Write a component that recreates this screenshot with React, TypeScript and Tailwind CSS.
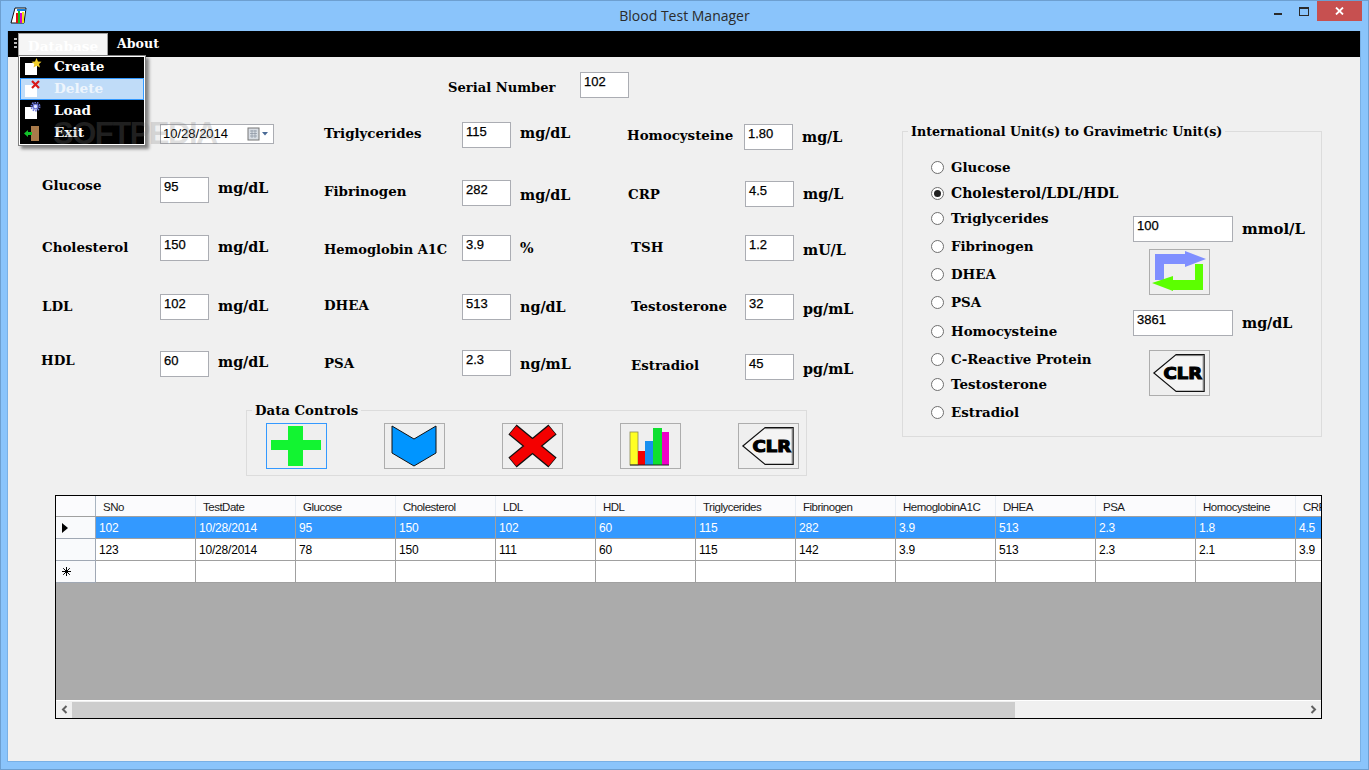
const slab = "font-['DejaVu_Serif',serif] font-bold leading-4 text-black whitespace-nowrap";
const lab = `${slab} text-[13.4px]`;
const unitText = `${slab} text-[14.3px]`;
const box = "h-[26px] border border-[#abadb3] bg-white pl-[3px] pt-[1px] text-[13px] leading-4 text-black [-webkit-text-stroke:0.25px_#000]";
const iconBtn = "flex h-[46px] w-[61px] items-center justify-center border border-[#adadad] bg-[#efefef]";

type Field = {
  label: string;
  value: string;
  unit: string;
  gap: string;
  labelCls: string;
  unitCls: string;
};

const col1: Field[] = [
  { label: "Glucose", value: "95", unit: "mg/dL", gap: "mt-[33px]", labelCls: "w-[118px] mt-0", unitCls: "mt-[3px]" },
  { label: "Cholesterol", value: "150", unit: "mg/dL", gap: "mt-[32px]", labelCls: "w-[118px] mt-[4px]", unitCls: "mt-[4px]" },
  { label: "LDL", value: "102", unit: "mg/dL", gap: "mt-[33px]", labelCls: "w-[118px] mt-[4px]", unitCls: "mt-[4px]" },
  { label: "HDL", value: "60", unit: "mg/dL", gap: "mt-[31px]", labelCls: "w-[119px] -ml-[1px] mt-[1px]", unitCls: "mt-[3px]" },
];

const col2: Field[] = [
  { label: "Triglycerides", value: "115", unit: "mg/dL", gap: "mt-0", labelCls: "w-[138px] mt-[3px]", unitCls: "mt-[3px]" },
  { label: "Fibrinogen", value: "282", unit: "mg/dL", gap: "mt-[32px]", labelCls: "w-[138px] mt-[3px]", unitCls: "mt-[7px]" },
  { label: "Hemoglobin A1C", value: "3.9", unit: "%", gap: "mt-[29px]", labelCls: "w-[138px] mt-[7px] !text-[13px]", unitCls: "mt-[5px]" },
  { label: "DHEA", value: "513", unit: "ng/dL", gap: "mt-[33px]", labelCls: "w-[138px] mt-[3px]", unitCls: "mt-[5px]" },
  { label: "PSA", value: "2.3", unit: "ng/mL", gap: "mt-[30px]", labelCls: "w-[138px] mt-[5px]", unitCls: "mt-[6px]" },
];

const col3: Field[] = [
  { label: "Homocysteine", value: "1.80", unit: "mg/L", gap: "mt-[2px]", labelCls: "w-[117px] mt-[3px]", unitCls: "mt-[5px] ml-[1px]" },
  { label: "CRP", value: "4.5", unit: "mg/L", gap: "mt-[31px]", labelCls: "w-[118px] pl-[1px] mt-[5px]", unitCls: "mt-[5px]" },
  { label: "TSH", value: "1.2", unit: "mU/L", gap: "mt-[28px]", labelCls: "w-[118px] pl-[4px] mt-[4px]", unitCls: "mt-[7px]" },
  { label: "Testosterone", value: "32", unit: "pg/mL", gap: "mt-[33px]", labelCls: "w-[118px] pl-[4px] mt-[4px]", unitCls: "mt-[7px]" },
  { label: "Estradiol", value: "45", unit: "pg/mL", gap: "mt-[34px]", labelCls: "w-[118px] pl-[4px] mt-[3px]", unitCls: "mt-[7px]" },
];

const radios = [
  { label: "Glucose", gap: "mt-0" },
  { label: "Cholesterol/LDL/HDL", gap: "mt-[10px]", checked: true },
  { label: "Triglycerides", gap: "mt-[9px]" },
  { label: "Fibrinogen", gap: "mt-[12px]" },
  { label: "DHEA", gap: "mt-[12px]" },
  { label: "PSA", gap: "mt-[12px]" },
  { label: "Homocysteine", gap: "mt-[13px]" },
  { label: "C-Reactive Protein", gap: "mt-[12px]" },
  { label: "Testosterone", gap: "mt-[9px]" },
  { label: "Estradiol", gap: "mt-[12px]" },
];

const columns = ["SNo", "TestDate", "Glucose", "Cholesterol", "LDL", "HDL", "Triglycerides", "Fibrinogen", "HemoglobinA1C", "DHEA", "PSA", "Homocysteine", "CRP"];
const rows = [
  ["102", "10/28/2014", "95", "150", "102", "60", "115", "282", "3.9", "513", "2.3", "1.8", "4.5"],
  ["123", "10/28/2014", "78", "150", "111", "60", "115", "142", "3.9", "513", "2.3", "2.1", "3.9"],
  ["", "", "", "", "", "", "", "", "", "", "", "", ""],
];

const FieldRow = ({ f }: { f: Field }) => (
  <div className={`flex h-[26px] items-start ${f.gap}`}>
    <span className={`${lab} ${f.labelCls}`}>{f.label}</span>
    <div className={`${box} w-[49px]`}>{f.value}</div>
    <span className={`${unitText} ml-[9px] ${f.unitCls}`}>{f.unit}</span>
  </div>
);

const ClrIcon = () => (
  <svg width="61" height="46" viewBox="0 0 61 46">
    <path d="M4 23 L27 4 H56 V42 H27 Z" fill="#f4f4f4" stroke="#111" strokeWidth="1.2" />
    <path d="M27 5 H55 V41" fill="none" stroke="#777" strokeWidth="1" />
    <text x="14" y="29" fontFamily="DejaVu Sans" fontWeight="700" fontSize="17" textLength="40" lengthAdjust="spacingAndGlyphs" stroke="#000" strokeWidth="1.2">CLR</text>
  </svg>
);

const PageIcon = ({ children }: { children: React.ReactNode }) => (
  <svg width="18" height="18" viewBox="0 0 18 18">
    <rect x="1" y="5" width="12" height="12" fill="#fff" />
    {children}
  </svg>
);

const MenuItem = ({ label, icon, active }: { label: string; icon: React.ReactNode; active?: boolean }) => (
  <div className={`flex h-[22px] items-center border pl-[3px] ${active ? "border-[#3399ff] bg-[#c0dcf8]" : "border-black bg-black"}`}>
    <span className="flex w-[30px] items-center">{icon}</span>
    <span className={`${slab} mb-[2px] text-[13.6px] ${active ? "!text-[#eef5fc]" : "!text-white"}`}>{label}</span>
  </div>
);

export default function App() {
  return (
    <div className="relative flex h-[770px] w-[1369px] flex-col overflow-hidden border border-[#6d9fd0] bg-[#8ac4fb] font-['Liberation_Sans',sans-serif]">
      {/* Title bar */}
      <div className="relative flex h-[30px] shrink-0 items-center justify-center pb-[2px]">
        <svg className="absolute left-[9px] top-[6px]" width="17" height="17" viewBox="0 0 17 17">
          <path d="M5 1 H16 L14 16 H1 Z" fill="#fff" stroke="#111" strokeWidth="1" />
          <rect x="6" y="6" width="2" height="10" fill="#e01010" />
          <rect x="8" y="4" width="2" height="12" fill="#10c020" />
          <rect x="10" y="6" width="2" height="10" fill="#d000d0" />
          <rect x="12" y="5" width="2" height="11" fill="#f0e010" />
          <path d="M7 2 H15.5 V4 H7 Z" fill="#1080e0" />
        </svg>
        <span className="font-['Open_Sans',sans-serif] text-[14px] text-[#2b2b2b]">Blood Test Manager</span>
        <div className="absolute right-[6px] top-0 flex items-start">
          <div className="mt-[12px] mr-[17px] h-[2px] w-[8px] bg-[#2a2a2a]" />
          <div className="mt-[6px] mr-[8px] h-[9px] w-[10px] border border-t-2 border-[#2a2a2a]" />
          <div className="flex h-[20px] w-[45px] items-center justify-center bg-[#c75050] text-white">
            <svg width="9" height="8" viewBox="0 0 9 8">
              <path d="M1 0.5 L8 7.5 M8 0.5 L1 7.5" stroke="#fff" strokeWidth="1.8" />
            </svg>
          </div>
        </div>
      </div>

      {/* Client area */}
      <div className="mx-[6px] flex h-[731px] w-[1354px] flex-col border-r border-b border-l border-[#79b0e5] bg-[#f0f0f0]">
        {/* Menu strip */}
        <div className="flex h-[26px] shrink-0 items-end bg-black pl-[6px]">
          <div className="mb-[9px] mr-[1px] flex w-[3px] flex-col gap-[2px]">
            <i className="h-[2px] w-[3px] bg-[#bbb]" />
            <i className="h-[2px] w-[3px] bg-[#bbb]" />
            <i className="h-[2px] w-[3px] bg-[#bbb]" />
          </div>
          <div className={`${slab} text-[13.6px] flex h-[24px] w-[90px] items-center justify-center border-x border-t border-[#a0a0a0] bg-[#f5f5f5] !text-white`}>Database</div>
          <div className={`${slab} text-[12.6px] mb-[5px] ml-[9px] !text-white`}>About</div>
        </div>

        <div className="flex items-start">
          {/* Left part */}
          <div className="flex w-[894px] shrink-0 flex-col">
            <div className="ml-[440px] mt-[15px] flex h-[26px] items-start">
              <span className={`${slab} text-[13.1px] mt-[8px] w-[132px]`}>Serial Number</span>
              <div className={`${box} w-[49px]`}>102</div>
            </div>

            <div className="mt-[24px] flex items-start">
              <div className="ml-[34px] flex w-[282px] flex-col">
                <div className="mt-[2px] flex h-[20px] items-center">
                  <div className="ml-[118px] flex h-[20px] w-[114px] items-center border border-[#abadb3] bg-white pl-[2px] text-[13px] text-black">
                    <span className="w-[84px]">10/28/2014</span>
                    <svg width="22" height="14" viewBox="0 0 22 14">
                      <rect x="1" y="1" width="11" height="12" fill="#d8dde4" stroke="#777" />
                      <path d="M3 4 H10 M3 6.5 H10 M3 9 H10 M5 3 V11 M8 3 V11" stroke="#8a94a0" strokeWidth="0.7" />
                      <path d="M15 5 H21 L18 8.5 Z" fill="#4a6a96" />
                    </svg>
                  </div>
                </div>
                {col1.map((f) => <FieldRow key={f.label} f={f} />)}
              </div>
              <div className="flex w-[303px] flex-col">
                {col2.map((f) => <FieldRow key={f.label} f={f} />)}
              </div>
              <div className="flex flex-col">
                {col3.map((f) => <FieldRow key={f.label} f={f} />)}
              </div>
            </div>

            {/* Data Controls */}
            <div className="relative ml-[238px] mt-[30px] flex h-[66px] w-[561px] items-start gap-[57px] border border-[#dcdcdc] pl-[19px] pt-[12px]">
              <span className={`${slab} text-[13.3px] absolute -top-[8px] left-[5px] bg-[#f0f0f0] px-[3px]`}>Data Controls</span>
              <button className={`${iconBtn} !border-[#3399ff]`}>
                <svg width="59" height="44" viewBox="1 1 59 44">
                  <path d="M22 3 H37 V17 H55 V27 H37 V43 H22 V27 H5 V17 H22 Z" fill="#12f431" />
                </svg>
              </button>
              <button className={iconBtn}>
                <svg width="59" height="44" viewBox="1 1 59 44">
                  <path d="M8 3 L30 16 L52 3 V30 L30 43 L8 30 Z" fill="#0095ff" stroke="#111" strokeWidth="1" />
                </svg>
              </button>
              <button className={iconBtn}>
                <svg width="59" height="44" viewBox="1 1 59 44">
                  <path d="M10.5 6.5 L50.5 39.5 M50.5 6.5 L10.5 39.5" stroke="#111" strokeWidth="13" />
                  <path d="M11 7 L50 39 M50 7 L11 39" stroke="#f40000" strokeWidth="10.5" />
                </svg>
              </button>
              <button className={iconBtn}>
                <svg width="59" height="44" viewBox="1 1 59 44">
                  <rect x="10" y="9" width="8" height="33" fill="#ffff22" stroke="#8a8a55" strokeWidth="0.8" />
                  <rect x="18" y="28" width="7" height="14" fill="#f40000" />
                  <rect x="25" y="18" width="8" height="24" fill="#1790f0" />
                  <rect x="33" y="5" width="9" height="37" fill="#0fe030" />
                  <rect x="42" y="9" width="7" height="33" fill="#ee00c8" />
                  <path d="M10 42 H49" stroke="#222" strokeWidth="1" />
                </svg>
              </button>
              <button className={iconBtn}>
                <ClrIcon />
              </button>
            </div>
          </div>

          {/* Unit converter */}
          <div className="relative mt-[74px] flex h-[306px] w-[420px] shrink-0 border border-[#dcdcdc]">
            <span className={`${slab} text-[12.7px] absolute -top-[8px] left-[5px] bg-[#f0f0f0] px-[3px]`}>International Unit(s) to Gravimetric Unit(s)</span>
            <div className="ml-[28px] flex w-[202px] flex-col pt-[27px]">
              {radios.map((r) => (
                <div key={r.label} className={`flex h-4 items-center gap-[7px] ${r.gap}`}>
                  <span className="flex h-[13px] w-[13px] items-center justify-center rounded-full border border-[#6f6f6f] bg-white">
                    {r.checked && <i className="h-[7px] w-[7px] rounded-full bg-[#222]" />}
                  </span>
                  <span className={r.checked ? `${slab} text-[14px]` : lab}>{r.label}</span>
                </div>
              ))}
            </div>
            <div className="flex flex-col pt-[84px]">
              <div className="flex items-start">
                <div className={`${box} w-[100px]`}>100</div>
                <span className={`${slab} text-[14.9px] ml-[9px] mt-[5px]`}>mmol/L</span>
              </div>
              <button className={`${iconBtn} ml-[16px] mt-[7px]`}>
                <svg width="59" height="44" viewBox="1 1 59 44">
                  <path d="M6 5 H36 V2 L57 10 L36 18 V15 H15 V31 H6 Z" fill="#7f8fff" />
                  <path d="M46 15 H54 V41 H24 V42 L3 34 L24 27 V31 H46 Z" fill="#5cff00" />
                </svg>
              </button>
              <div className="mt-[15px] flex items-start">
                <div className={`${box} w-[100px]`}>3861</div>
                <span className={`${unitText} ml-[9px] mt-[5px]`}>mg/dL</span>
              </div>
              <button className={`${iconBtn} ml-[16px] mt-[14px]`}>
                <ClrIcon />
              </button>
            </div>
          </div>
        </div>

        {/* Data grid */}
        <div className="ml-[47px] mt-[19px] flex h-[224px] w-[1267px] flex-col overflow-hidden border border-black bg-[#ababab] text-[12px] text-black">
          <div className="flex h-[21px] shrink-0 border-b border-[#a0a0a0] bg-[#fbfbfd]">
            <div className="w-[40px] shrink-0 border-r border-[#a9b4c0]" />
            {columns.map((c) => (
              <div key={c} className="w-[100px] shrink-0 border-r border-[#e6ebf2] pl-[7px] text-[11.5px] leading-[22px] tracking-[-0.5px] text-[#1a1a1a]">{c}</div>
            ))}
          </div>
          {rows.map((r, i) => (
            <div key={i} className={`flex h-[22px] shrink-0 ${i === 0 ? "bg-[#3399ff] text-white" : "bg-white"}`}>
              <div className="flex w-[40px] shrink-0 items-center border-r border-b border-[#a0a8b4] bg-[#f9fafc] pl-[6px]">
                {i === 0 && (
                  <svg width="6" height="10" viewBox="0 0 6 10"><path d="M0 0 L6 5 L0 10 Z" fill="#000" /></svg>
                )}
                {i === 2 && (
                  <svg width="9" height="9" viewBox="0 0 9 9"><path d="M4.5 0 V9 M0 4.5 H9 M1.2 1.2 L7.8 7.8 M7.8 1.2 L1.2 7.8" stroke="#000" strokeWidth="1" /></svg>
                )}
              </div>
              {r.map((v, j) => (
                <div key={j} className="w-[100px] shrink-0 border-r border-b border-[#a0a0a0] pl-[3px] leading-[23px] tracking-[-0.2px]">{v}</div>
              ))}
            </div>
          ))}
          <div className="flex-1" />
          <div className="flex h-[18px] shrink-0 items-center border-t border-white bg-[#f0f0f0]">
            <div className="flex w-[16px] shrink-0 justify-center">
              <svg width="7" height="9" viewBox="0 0 7 9"><path d="M5.5 1 L2 4.5 L5.5 8" fill="none" stroke="#606060" strokeWidth="2" /></svg>
            </div>
            <div className="h-[16px] w-[943px] bg-[#cdcdcd]" />
            <div className="ml-auto flex w-[16px] justify-center">
              <svg width="7" height="9" viewBox="0 0 7 9"><path d="M1.5 1 L5 4.5 L1.5 8" fill="none" stroke="#606060" strokeWidth="2" /></svg>
            </div>
          </div>
        </div>
      </div>

      {/* Open Database menu */}
      <div className="absolute left-[17px] top-[54px] flex h-[91px] w-[128px] flex-col border border-[#808080] bg-black shadow-[3px_3px_3px_rgba(0,0,0,0.45)] outline outline-1 -outline-offset-2 outline-white">
        <div className="mx-[1px] mb-[1px] flex flex-col">
          <MenuItem label="Create" icon={
            <PageIcon><path d="M12.5 0 L14 3.5 L17.5 3.8 L15 6 L16 9.5 L12.5 7.7 L9.5 9.5 L10.3 6 L7.5 3.8 L11 3.5 Z" fill="#f2cf2a" /></PageIcon>
          } />
          <MenuItem active label="Delete" icon={
            <PageIcon><path d="M8 1 L15 8 M15 1 L8 8" stroke="#d81818" strokeWidth="2.2" /></PageIcon>
          } />
          <MenuItem label="Load" icon={
            <PageIcon>
              <circle cx="11.5" cy="4.5" r="4.2" fill="none" stroke="#6a74d8" strokeWidth="1.6" strokeDasharray="1.6 1" />
              <circle cx="11.5" cy="4.5" r="2.4" fill="#e0e4ff" stroke="#6a74d8" strokeWidth="1.4" />
            </PageIcon>
          } />
          <MenuItem label="Exit" icon={
            <svg width="18" height="18" viewBox="0 0 18 18">
              <rect x="7" y="2" width="8" height="15" fill="#a87a4a" />
              <path d="M0 9.5 L4 6 V8 H8 V11 H4 V13 Z" fill="#12c02a" />
            </svg>
          } />
        </div>
      </div>

      {/* Screenshot watermark */}
      <span className="pointer-events-none absolute left-[52px] top-[117px] font-['Liberation_Sans',sans-serif] text-[31px] font-bold leading-[32px] tracking-[-1.5px] text-[#808080]/25">SOFTPEDIA</span>
    </div>
  );
}
